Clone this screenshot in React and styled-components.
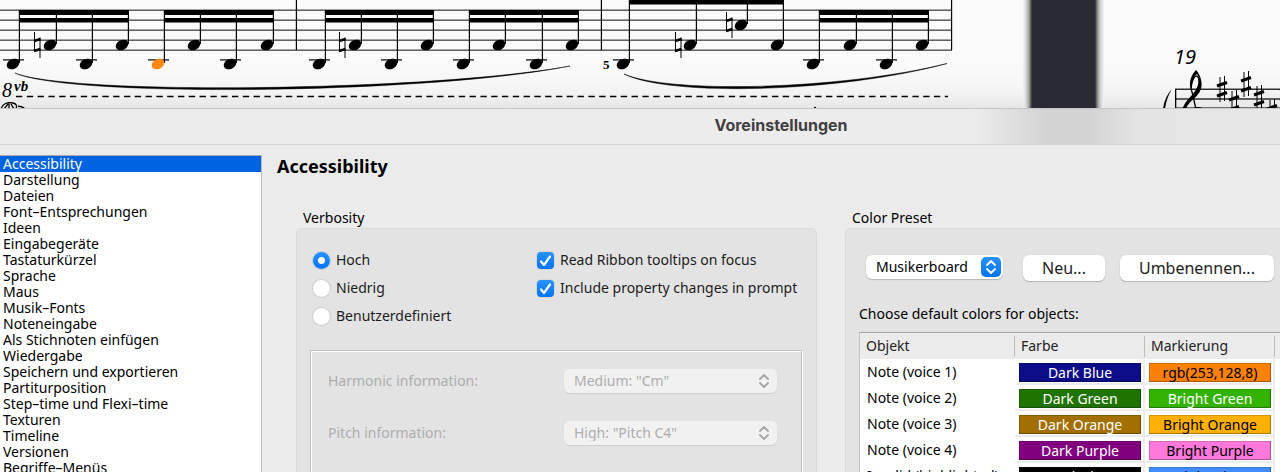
import React, { useState } from "react";
import styled, { createGlobalStyle } from "styled-components";

const categories = [
  "Accessibility",
  "Darstellung",
  "Dateien",
  "Font–Entsprechungen",
  "Ideen",
  "Eingabegeräte",
  "Tastaturkürzel",
  "Sprache",
  "Maus",
  "Musik–Fonts",
  "Noteneingabe",
  "Als Stichnoten einfügen",
  "Wiedergabe",
  "Speichern und exportieren",
  "Partiturposition",
  "Step–time und Flexi–time",
  "Texturen",
  "Timeline",
  "Versionen",
  "Begriffe–Menüs",
];

const colorRows = [
  { name: "Note (voice 1)", color: ["Dark Blue", "#0d0d8a", "#fff"], mark: ["rgb(253,128,8)", "#fd8008", "#000"] },
  { name: "Note (voice 2)", color: ["Dark Green", "#1f7300", "#fff"], mark: ["Bright Green", "#33b300", "#fff"] },
  { name: "Note (voice 3)", color: ["Dark Orange", "#a36f00", "#fff"], mark: ["Bright Orange", "#ffb000", "#000"] },
  { name: "Note (voice 4)", color: ["Dark Purple", "#800080", "#fff"], mark: ["Bright Purple", "#ff78dc", "#000"] },
  { name: "Invalid (highlighted)", color: ["Black", "#000", "#fff"], mark: ["Light Blue", "#3f8cff", "#000"] },
];

// heads are [x, y] centres, beam is the top of the upper beam
const beamGroups = [
  { heads: [[13, 64], [50, 45], [86, 64], [122, 45]], beam: 10 },
  { heads: [[158, 64], [194, 45], [230, 64], [267, 45]], beam: 10, active: 0 },
  { heads: [[319, 64], [355, 45], [391, 64], [427, 45]], beam: 10 },
  { heads: [[463, 64], [499, 45], [536, 64], [572, 45]], beam: 10 },
  { heads: [[623, 64], [690, 45], [741, 25], [777, 45]], beam: -8 },
  { heads: [[813, 64], [850, 45], [886, 64], [922, 45]], beam: 10 },
];

const naturals = [[37, 45], [342, 45], [678, 45], [729, 25]];
const sharps = [[1222, 89], [1234, 103], [1246, 84], [1259, 98], [1272, 112], [1285, 94]];

const BeamGroup = ({ heads, beam, active }) => {
  const first = heads[0][0] + 6;
  const width = heads[3][0] + 7 - first;
  return (
    <g>
      <rect x={first} y={beam} width={width} height="5" />
      <rect x={first} y={beam + 8} width={width} height="4.5" />
      {heads.map(([x, y], i) => (
        <g key={x}>
          <rect x={x + 5.8} y={beam} width="1.2" height={y - beam - 1} />
          {y === 64 && <rect x={x - 10} y="59.3" width="21" height="1.2" />}
          <ellipse
            cx={x}
            cy={y}
            rx="6.6"
            ry="4.9"
            transform={`rotate(-26 ${x} ${y})`}
            fill={i === active ? "#ff8810" : "#000"}
          />
        </g>
      ))}
    </g>
  );
};

const Score = () => (
  <ScoreDrawing width="1280" height="108" viewBox="0 0 1280 108" role="img" aria-label="Partitur">
    <defs>
      <linearGradient id="fade" x1="0" y1="0" x2="0" y2="1">
        <stop offset="0" stopColor="#000" stopOpacity="0" />
        <stop offset="0.6" stopColor="#000" stopOpacity="0.025" />
        <stop offset="1" stopColor="#000" stopOpacity="0.08" />
      </linearGradient>
      <linearGradient id="gap">
        <stop offset="0" stopColor="#f2f2f4" />
        <stop offset="0.04" stopColor="#d4d4dc" />
        <stop offset="0.07" stopColor="#a8a8a6" />
        <stop offset="0.1" stopColor="#55544f" />
        <stop offset="0.11" stopColor="#2a2a34" />
        <stop offset="0.89" stopColor="#2a2a34" />
        <stop offset="0.9" stopColor="#55544f" />
        <stop offset="0.93" stopColor="#a8a8a6" />
        <stop offset="0.96" stopColor="#d4d4dc" />
        <stop offset="1" stopColor="#f2f2f4" />
      </linearGradient>
    </defs>
    <rect x="0" y="66" width="1280" height="42" fill="url(#fade)" />
    <rect x="1023" y="0" width="81" height="108" fill="url(#gap)" />

    {[10, 20, 30, 40, 50].map((y) => (
      <rect key={y} x="0" y={y - 0.4} width="952" height="1.1" fill="#222" />
    ))}
    <rect x="295.800" y="0" width="1.200" height="50" />
    <rect x="600.800" y="0" width="1.200" height="50" />
    <rect x="951" y="0" width="1.200" height="50" />

    {beamGroups.map((group) => (
      <BeamGroup key={group.heads[0][0]} {...group} />
    ))}

    {naturals.map(([x, y]) => (
      <g key={x}>
        <path d={`M${x - 2.5} ${y - 13}V${y + 6.5}M${x + 3} ${y - 7.5}V${y + 13}`} stroke="#000" />
        <path d={`M${x - 3} ${y - 4}L${x + 3.5} ${y - 6}M${x - 3} ${y + 6}L${x + 3.5} ${y + 4}`} stroke="#000" strokeWidth="2.4" />
      </g>
    ))}

    <path d="M15 73C70 95.500 430 91.500 570 66C430 94 70 98 15 73Z" stroke="#000" strokeWidth="0.5" />
    <path d="M624 74C670 94 840 90 947 63.500C840 92.500 670 97 624 74Z" stroke="#000" strokeWidth="0.5" />
    <path d="M16 96.500H948" stroke="#000" strokeWidth="1.3" strokeDasharray="6.300 4.500" />
    <text x="2" y="97" fontSize="20" fontStyle="italic">8</text>
    <text x="14" y="91" fontSize="15" fontStyle="italic" fontWeight="bold">vb</text>
    <text x="603" y="69" fontSize="13" fontWeight="bold">5</text>
    <path d="M1 110C2 103 8 102 13 103C17 104 17 106 16 109M9 102V109M4 109L8 104M11 104L14 109" stroke="#000" strokeWidth="1.3" fill="none" />
    <path d="M18 105.500C22 105.500 24 107 26 109C22 108 20 107 18 107Z" />
    <circle cx="815" cy="108" r="1.2" />

    <ScoreNumber x="1174" y="64">19</ScoreNumber>
    <rect x="1175" y="88.600" width="105" height="1.200" />
    <rect x="1175" y="98.400" width="105" height="1.200" />
    <rect x="1175" y="107.500" width="105" height="1" />
    <rect x="1175" y="89" width="1.300" height="20" />
    <path d="M1172 89C1167 94 1164 101 1163 109H1165C1166 102 1168 95 1172 89Z" />
    <path d="M1183 109C1186 101 1198 94 1199 83C1199 79 1198 76 1196.500 76C1193 77 1190 86 1192 92L1196 109" fill="none" stroke="#000" strokeWidth="1.300" />
    <path d="M1183 109C1184 101 1192 97 1198 87C1200 82 1199 76 1197 74C1193 77 1191 85 1192 90L1191 91C1188 82 1192 74 1196 70C1200 74 1203 82 1201 89C1198 98 1188 101 1186 109Z" />
    <path d="M1192 109C1194 106.500 1201 106 1204 109Z" />
    {sharps.map(([x, y]) => (
      <g key={x}>
        <path d={`M${x - 2} ${y - 12}V${y + 13}M${x + 2.5} ${y - 13}V${y + 12}`} stroke="#000" />
        <path d={`M${x - 5} ${y - 3}L${x + 5} ${y - 6.5}M${x - 5} ${y + 7}L${x + 5} ${y + 3.5}`} stroke="#000" strokeWidth="3" />
      </g>
    ))}
  </ScoreDrawing>
);

const Chevrons = () => (
  <svg width="12" height="16" viewBox="0 0 12 16" fill="none" stroke="currentColor" strokeWidth="1.8" strokeLinecap="round" strokeLinejoin="round">
    <path d="M2 6L6 2L10 6M2 10L6 14L10 10" />
  </svg>
);

const PopUp = ({ id, value, disabled, label }) => (
  <SelectWrap $disabled={disabled}>
    <Select id={id} disabled={disabled} aria-label={label} defaultValue={value}>
      <option>{value}</option>
    </Select>
    <Arrows $disabled={disabled}>
      <Chevrons />
    </Arrows>
  </SelectWrap>
);

const App = () => {
  const [selected, setSelected] = useState(categories[0]);
  const [level, setLevel] = useState("Hoch");

  return (
    <>
      <GlobalStyle />
      <Screen>
        <Score />
        <Dialog>
          <TitleBar>Voreinstellungen</TitleBar>
          <Body>
            <Sidebar>
              {categories.map((item) => (
                <li key={item}>
                  <Category $active={item === selected} onClick={() => setSelected(item)}>
                    {item}
                  </Category>
                </li>
              ))}
            </Sidebar>
            <Content>
              <Heading>Accessibility</Heading>
              <Groups>
                <Group>
                  <Legend>Verbosity</Legend>
                  <Panel>
                    <Options>
                      <OptionList>
                        {["Hoch", "Niedrig", "Benutzerdefiniert"].map((item) => (
                          <Option key={item}>
                            <Radio name="verbosity" checked={level === item} onChange={() => setLevel(item)} />
                            {item}
                          </Option>
                        ))}
                      </OptionList>
                      <OptionList>
                        {["Read Ribbon tooltips on focus", "Include property changes in prompt"].map((item) => (
                          <Option key={item}>
                            <CheckWrap>
                              <Checkbox defaultChecked />
                              <svg width="17" height="17" viewBox="0 0 17 17" fill="none" stroke="#fff" strokeWidth="2.2" strokeLinecap="round" strokeLinejoin="round">
                                <path d="M4 9.500L7 13L13 4.500" />
                              </svg>
                            </CheckWrap>
                            {item}
                          </Option>
                        ))}
                      </OptionList>
                    </Options>
                    <Etched>
                      <Field>
                        <label htmlFor="harmonic">Harmonic information:</label>
                        <PopUp id="harmonic" value={'Medium: "Cm"'} disabled />
                      </Field>
                      <Field>
                        <label htmlFor="pitch">Pitch information:</label>
                        <PopUp id="pitch" value={'High: "Pitch C4"'} disabled />
                      </Field>
                    </Etched>
                  </Panel>
                </Group>
                <Group>
                  <Legend>Color Preset</Legend>
                  <Panel>
                    <PresetBar>
                      <PopUp value="Musikerboard" label="Color Preset" />
                      <Button>Neu...</Button>
                      <Button>Umbenennen...</Button>
                    </PresetBar>
                    <Hint>Choose default colors for objects:</Hint>
                    <Table>
                      <colgroup>
                        <col width="155" />
                        <col width="130" />
                        <col width="130" />
                        <col />
                      </colgroup>
                      <thead>
                        <tr>
                          <th>Objekt</th>
                          <th>Farbe</th>
                          <th>Markierung</th>
                          <th aria-label="Optionen" />
                        </tr>
                      </thead>
                      <tbody>
                        {colorRows.map(({ name, color, mark }) => (
                          <tr key={name}>
                            <td>{name}</td>
                            {[color, mark].map(([label, fill, ink]) => (
                              <SwatchCell key={label}>
                                <Swatch $fill={fill} $ink={ink}>{label}</Swatch>
                              </SwatchCell>
                            ))}
                            <td />
                          </tr>
                        ))}
                      </tbody>
                    </Table>
                  </Panel>
                </Group>
              </Groups>
            </Content>
          </Body>
        </Dialog>
      </Screen>
    </>
  );
};

export default App;

const GlobalStyle = createGlobalStyle`
  * {
    box-sizing: border-box;
  }
  body {
    margin: 0;
    background: #fafafa;
    color: #000;
    font-family: "Noto Sans", "Open Sans", sans-serif;
    font-size: 14px;
    line-height: 16px;
  }
  button, select, input {
    font: inherit;
    margin: 0;
  }
`;

const Screen = styled.div`
  display: flex;
  flex-direction: column;
  height: 100vh;
  overflow: hidden;
`;

const ScoreDrawing = styled.svg`
  display: block;
  flex: none;
  font-family: "Liberation Serif", serif;
`;

const ScoreNumber = styled.text`
  font-family: "Noto Sans", sans-serif;
  font-size: 20px;
  font-style: italic;
`;

const Dialog = styled.main`
  display: flex;
  flex-direction: column;
  flex: 1;
  min-height: 0;
  background: #ebebeb;
  border-top: 1px solid #c6c6c6;
`;

const TitleBar = styled.header`
  flex: none;
  height: 36px;
  padding: 0 0 0 282px;
  border-bottom: 1px solid #d3d3d3;
  background: linear-gradient(90deg, #ececec 76%, #d2d2d2 82%, #d2d2d2 85%, #e4e4e4 89%, #e8e8e8);
  color: #404040;
  font-family: Inter, sans-serif;
  font-size: 16px;
  font-weight: 700;
  line-height: 33px;
  text-align: center;
`;

const Body = styled.div`
  display: flex;
  flex: 1;
  min-height: 0;
  padding-top: 10px;
`;

const Sidebar = styled.ul`
  flex: 0 0 262px;
  margin: 0;
  padding: 0;
  overflow: hidden;
  list-style: none;
  background: #fff;
  border-top: 1px solid #a8a8a8;
  border-right: 1px solid #bcbcbc;
  li {
    height: 16px;
  }
`;

const Category = styled.button`
  display: block;
  width: 100%;
  height: 16px;
  padding: 0 3px;
  border: 0;
  text-align: left;
  line-height: 16px;
  white-space: nowrap;
  background: ${({ $active }) => ($active ? "#0063e1" : "transparent")};
  color: ${({ $active }) => ($active ? "#fff" : "#000")};
`;

const Content = styled.section`
  flex: 1;
  min-width: 0;
  padding-left: 15px;
`;

const Heading = styled.h1`
  margin: 0;
  font-size: 18px;
  line-height: 22px;
`;

const Groups = styled.div`
  display: grid;
  grid-template-columns: minmax(521px, 1.1fr) minmax(480px, 1fr);
  gap: 28px;
  padding: 33px 0 0 19px;
`;

const Group = styled.section`
  display: flex;
  flex-direction: column;
`;

const Legend = styled.h2`
  margin: 0 0 2px 7px;
  font-size: 14px;
  font-weight: 400;
  line-height: 16px;
`;

const Panel = styled.div`
  flex: 1;
  min-height: 260px;
  padding: 17px 14px 0 13px;
  border: 1px solid #d9d9d9;
  border-radius: 6px;
  background: #e3e3e3;
`;

const Options = styled.div`
  display: grid;
  grid-template-columns: 224px 1fr;
  padding-left: 3px;
  color: #1c1c1c;
`;

const OptionList = styled.div`
  display: flex;
  flex-direction: column;
`;

const Option = styled.label`
  display: flex;
  align-items: center;
  gap: 6px;
  height: 28px;
`;

const Radio = styled.input.attrs({ type: "radio" })`
  appearance: none;
  width: 17px;
  height: 17px;
  border-radius: 50%;
  background: #fff;
  box-shadow: 0 0 1px 1px rgba(0, 0, 0, 0.1);
  &:checked {
    background: radial-gradient(circle, #fff 3px, transparent 4px), linear-gradient(#2b92ff, #0074f5);
  }
`;

const CheckWrap = styled.span`
  position: relative;
  display: flex;
  svg {
    position: absolute;
    inset: 0;
    pointer-events: none;
  }
`;

const Checkbox = styled.input.attrs({ type: "checkbox" })`
  appearance: none;
  width: 17px;
  height: 17px;
  border-radius: 4px;
  background: #fff;
  box-shadow: 0 0 1px 1px rgba(0, 0, 0, 0.06);
  &:checked {
    background: linear-gradient(#2b92ff, #0074f5);
  }
  &:not(:checked) + svg {
    display: none;
  }
`;

const Etched = styled.div`
  display: flex;
  flex-direction: column;
  gap: 28px;
  height: 180px;
  margin-top: 20px;
  padding: 18px 24px 0 17px;
  border: 1px solid #bdbdbd;
  box-shadow: inset 1px 1px 0 #fff, 1px 1px 0 #fff;
`;

const Field = styled.div`
  display: grid;
  grid-template-columns: 1fr 213px;
  align-items: center;
  color: #adadad;
`;

const SelectWrap = styled.div`
  position: relative;
  width: ${({ $disabled }) => ($disabled ? "100%" : "137px")};
`;

const Select = styled.select`
  appearance: none;
  display: block;
  width: 100%;
  height: 24px;
  padding: 0 28px 0 10px;
  border: 0;
  border-radius: 6px;
  background: #fff;
  color: #000;
  box-shadow: 0 1px 1px rgba(0, 0, 0, 0.2), 0 0 1px rgba(0, 0, 0, 0.15);
  &:disabled {
    background: #f1f1f1;
    color: #adadad;
    opacity: 1;
    box-shadow: 0 1px 1px rgba(0, 0, 0, 0.1);
  }
`;

const Arrows = styled.span`
  position: absolute;
  top: 2px;
  right: ${({ $disabled }) => ($disabled ? "3px" : "2px")};
  display: grid;
  place-items: center;
  width: 20px;
  height: 20px;
  border-radius: 5px;
  background: ${({ $disabled }) => ($disabled ? "none" : "linear-gradient(#2b92ff, #0074f5)")};
  color: ${({ $disabled }) => ($disabled ? "#a4a4a4" : "#fff")};
  pointer-events: none;
`;

const PresetBar = styled.div`
  display: flex;
  align-items: flex-start;
  gap: 15px;
  padding: 9px 0 0 7px;
  ${SelectWrap} {
    margin-right: 5px;
  }
`;

const Button = styled.button`
  height: 26px;
  padding: 0 19px;
  border: 0;
  border-radius: 6px;
  background: #fff;
  color: #222;
  font-size: 16px;
  line-height: 25px;
  box-shadow: 0 1px 1px rgba(0, 0, 0, 0.2), 0 0 1px rgba(0, 0, 0, 0.15);
`;

const Hint = styled.p`
  margin: 25px 0 10px;
`;

const Table = styled.table`
  width: 100%;
  table-layout: fixed;
  border-collapse: separate;
  border-spacing: 0;
  border-top: 1px solid #a8a8a8;
  border-left: 1px solid #c4c4c4;
  background: #fff;
  th {
    height: 26px;
    padding: 0 6px;
    background: linear-gradient(#bdbdbd, #bdbdbd) right center / 1px 21px no-repeat #ebebeb;
    color: #222;
    font-weight: 400;
    text-align: left;
  }
  td {
    height: 26px;
    padding: 0 7px;
    white-space: nowrap;
    overflow: hidden;
  }
`;

const SwatchCell = styled.td`
  && {
    padding: 4px 2px 1px 4px;
    border-right: 2px solid #ececec;
    border-bottom: 2px solid #ececec;
  }
`;

const Swatch = styled.button`
  display: block;
  width: 100%;
  height: 19px;
  padding: 0;
  border: 0;
  background: ${({ $fill }) => $fill};
  color: ${({ $ink }) => $ink};
  line-height: 18px;
  text-align: center;
  box-shadow: inset 0 0 0 1px rgba(0, 0, 0, 0.15), inset -1px -1px 1px rgba(0, 0, 0, 0.2);
`;
